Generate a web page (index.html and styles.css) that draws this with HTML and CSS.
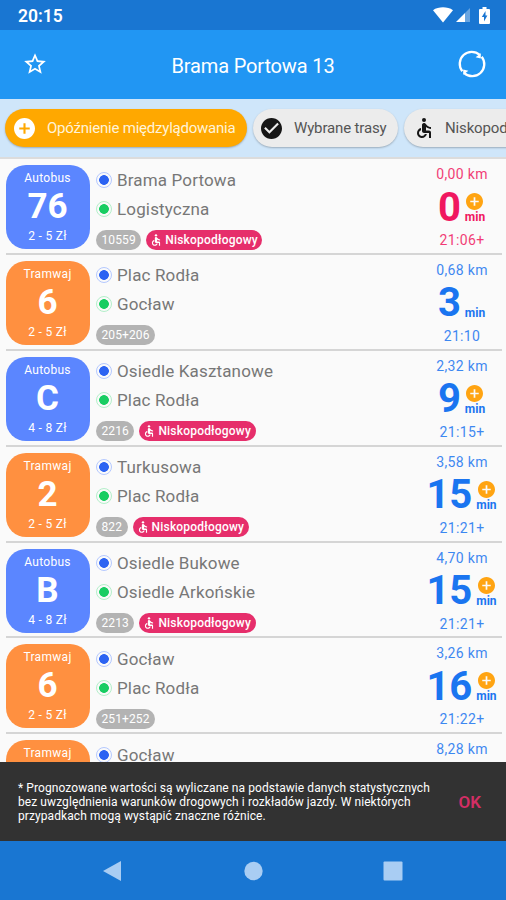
FILE: index.html
```html
<!DOCTYPE html>
<html lang="pl">
<head>
<meta charset="utf-8">
<title>Brama Portowa 13</title>
<link rel="stylesheet" href="styles.css">
</head>
<body>
<svg class="sprite" aria-hidden="true">
  <symbol id="wheelchair" viewBox="0 0 24 24"><circle cx="12" cy="4" r="2"/><path d="M19 13v-2c-1.54.02-3.09-.75-4.07-1.83l-1.29-1.43c-.17-.19-.38-.34-.61-.45-.01 0-.01-.01-.02-.01H13c-.35-.2-.75-.3-1.19-.26C10.76 7.11 10 8.04 10 9.09V15c0 1.1.9 2 2 2h5v5h2v-5.5c0-1.1-.9-2-2-2h-3v-3.45c1.29 1.07 3.25 1.94 5 1.95zm-6.17 5c-.41 1.16-1.52 2-2.83 2-1.66 0-3-1.34-3-3 0-1.31.84-2.41 2-2.83V12.1c-2.28.46-4 2.48-4 4.9 0 2.76 2.24 5 5 5 2.42 0 4.44-1.72 4.9-4h-2.07z"/></symbol>
  <symbol id="plus" viewBox="2 2 20 20"><path d="M12 2C6.48 2 2 6.48 2 12s4.480 10 10 10 10-4.480 10-10S17.520 2 12 2zm5 11h-4v4h-2v-4H7v-2h4V7h2v4h4v2z"/></symbol>
</svg>
<div class="screen">
  <div class="status">
    <span class="clock">20:15</span>
    <div class="status-icons">
      <svg width="20" height="16" viewBox="0 0 20 16"><path fill="#fff" d="M0 3.200C5.500-.6 14.500-.6 20 3.200L10 15.500z"/></svg>
      <svg width="14" height="14" viewBox="0 0 14 14"><path fill="#fff" d="M0 14L9 5v9z"/><path fill="#fff" opacity=".35" d="M9 5l5-5v14H9z"/></svg>
      <svg class="battery" width="11" height="17" viewBox="0 0 11 17"><path fill="#fff" d="M3.500 0h4v2H10q1 0 1 1v13q0 1-1 1H1q-1 0-1-1V3q0-1 1-1h2.500z"/><path fill="#1976d2" d="M6.500 4L2.800 10H5v4.500L8.400 8.600H6.500z"/></svg>
    </div>
  </div>
  <header class="appbar">
    <svg class="star" width="26" height="26" viewBox="0 0 24 24" fill="#fff"><path d="M22 9.240l-7.190-.62L12 2 9.190 8.630 2 9.240l5.460 4.730L5.820 21 12 17.270 18.180 21l-1.630-7.030L22 9.240zM12 15.400l-3.760 2.270 1-4.280-3.320-2.880 4.380-.38L12 6.100l1.710 4.040 4.380.38-3.320 2.880 1 4.280L12 15.400z"/></svg>
    <h1>Brama Portowa 13</h1>
    <svg class="sync" width="28" height="28" viewBox="0 0 28 28"><g fill="none" stroke="#fff" stroke-width="2.300"><path d="M4.300 21.200A12 12 0 0 1 21.800 4.900"/><path d="M23.700 6.800A12 12 0 0 1 6.200 23.100"/></g><path fill="#fff" d="M22.800 3.200v5.400l-5.200-1.300zM5.200 24.800v-5.400l5.200 1.300z"/></svg>
  </header>
  <nav class="chips">
    <div class="chip chip-delay"><svg width="21" height="21"><use href="#plus"/></svg><span>Opóźnienie międzylądowania</span></div>
    <div class="chip chip-routes"><svg width="21" height="21" viewBox="2 2 20 20"><path d="M12 2C6.480 2 2 6.480 2 12s4.480 10 10 10 10-4.480 10-10S17.520 2 12 2zm-2 15l-5-5 1.410-1.410L10 14.170l7.590-7.590L19 8l-9 9z"/></svg><span>Wybrane trasy</span></div>
    <div class="chip chip-low"><svg width="24" height="24"><use href="#wheelchair"/></svg><span>Niskopodłogowy</span></div>
  </nav>
  <main class="list">
    <article class="row now">
      <div class="line bus"><span>Autobus</span><b>76</b><span>2 - 5 Zł</span></div>
      <div class="route">
        <p class="stop from">Brama Portowa</p><p class="stop to">Logistyczna</p>
        <div class="tags"><span class="tag">10559</span><span class="tag low"><svg width="14" height="14"><use href="#wheelchair"/></svg>Niskopodłogowy</span></div>
      </div>
      <div class="eta"><span class="km">0,00 km</span><div class="mins"><b>0</b><div class="unit"><svg width="17" height="17"><use href="#plus"/></svg><i>min</i></div></div><span class="at">21:06+</span></div>
    </article>
    <article class="row">
      <div class="line tram"><span>Tramwaj</span><b>6</b><span>2 - 5 Zł</span></div>
      <div class="route">
        <p class="stop from">Plac Rodła</p><p class="stop to">Gocław</p>
        <div class="tags"><span class="tag">205+206</span></div>
      </div>
      <div class="eta"><span class="km">0,68 km</span><div class="mins"><b>3</b><div class="unit"><i>min</i></div></div><span class="at">21:10</span></div>
    </article>
    <article class="row">
      <div class="line bus"><span>Autobus</span><b>C</b><span>4 - 8 Zł</span></div>
      <div class="route">
        <p class="stop from">Osiedle Kasztanowe</p><p class="stop to">Plac Rodła</p>
        <div class="tags"><span class="tag">2216</span><span class="tag low"><svg width="14" height="14"><use href="#wheelchair"/></svg>Niskopodłogowy</span></div>
      </div>
      <div class="eta"><span class="km">2,32 km</span><div class="mins"><b>9</b><div class="unit"><svg width="17" height="17"><use href="#plus"/></svg><i>min</i></div></div><span class="at">21:15+</span></div>
    </article>
    <article class="row">
      <div class="line tram"><span>Tramwaj</span><b>2</b><span>2 - 5 Zł</span></div>
      <div class="route">
        <p class="stop from">Turkusowa</p><p class="stop to">Plac Rodła</p>
        <div class="tags"><span class="tag">822</span><span class="tag low"><svg width="14" height="14"><use href="#wheelchair"/></svg>Niskopodłogowy</span></div>
      </div>
      <div class="eta"><span class="km">3,58 km</span><div class="mins"><b>15</b><div class="unit"><svg width="17" height="17"><use href="#plus"/></svg><i>min</i></div></div><span class="at">21:21+</span></div>
    </article>
    <article class="row">
      <div class="line bus"><span>Autobus</span><b>B</b><span>4 - 8 Zł</span></div>
      <div class="route">
        <p class="stop from">Osiedle Bukowe</p><p class="stop to">Osiedle Arkońskie</p>
        <div class="tags"><span class="tag">2213</span><span class="tag low"><svg width="14" height="14"><use href="#wheelchair"/></svg>Niskopodłogowy</span></div>
      </div>
      <div class="eta"><span class="km">4,70 km</span><div class="mins"><b>15</b><div class="unit"><svg width="17" height="17"><use href="#plus"/></svg><i>min</i></div></div><span class="at">21:21+</span></div>
    </article>
    <article class="row">
      <div class="line tram"><span>Tramwaj</span><b>6</b><span>2 - 5 Zł</span></div>
      <div class="route">
        <p class="stop from">Gocław</p><p class="stop to">Plac Rodła</p>
        <div class="tags"><span class="tag">251+252</span></div>
      </div>
      <div class="eta"><span class="km">3,26 km</span><div class="mins"><b>16</b><div class="unit"><svg width="17" height="17"><use href="#plus"/></svg><i>min</i></div></div><span class="at">21:22+</span></div>
    </article>
    <article class="row">
      <div class="line tram"><span>Tramwaj</span></div>
      <div class="route"><p class="stop from">Gocław</p></div>
      <div class="eta"><span class="km">8,28 km</span></div>
    </article>
  </main>
  <aside class="snackbar">
    <p>* Prognozowane wartości są wyliczane na podstawie danych statystycznych<br>bez uwzględnienia warunków drogowych i rozkładów jazdy. W niektórych<br>przypadkach mogą wystąpić znaczne różnice.</p>
    <button>OK</button>
  </aside>
  <footer class="navbar">
    <svg width="20" height="22" viewBox="0 0 20 22"><path d="M18 1v20L0 11z"/></svg>
    <svg width="20" height="20" viewBox="0 0 20 20"><circle cx="10.500" cy="10" r="9.200"/></svg>
    <svg width="20" height="20" viewBox="0 0 20 20"><rect x=".5" y=".5" width="19" height="19" rx="1"/></svg>
  </footer>
</div>
</body>
</html>
```
FILE: styles.css
```css
* { box-sizing: border-box; }
body { margin: 0; font-family: Roboto, "Noto Sans", sans-serif; }
p, h1 { margin: 0; }
svg { display: block; flex: none; }
.sprite { display: none; }
.screen { width: 506px; height: 900px; display: flex; flex-direction: column; overflow: hidden; background: #fafafa; }

.status { flex: none; height: 30px; background: #1976d2; display: flex; align-items: center; justify-content: space-between; padding: 2px 16px 0 18px; color: #fff; }
.clock { font-size: 17.500px; font-weight: 600; letter-spacing: 0; line-height: 28px; }
.status-icons { display: flex; align-items: center; gap: 3px; margin-top: -2px; }
.battery { margin-left: 6px; }

.appbar { flex: none; height: 69px; background: #2196f3; display: flex; align-items: center; justify-content: space-between; padding: 0 20px 0 22px; }
.appbar h1 { font-size: 20px; font-weight: 400; letter-spacing: -.15px; color: #fff; padding-top: 2px; }
.star { margin-top: -1px; }
.sync { margin-top: -1px; }

.chips { flex: none; height: 60px; background: #cfe6fa; border-bottom: 2px solid #dcdcdc; display: flex; gap: 6px; padding: 10px 0 0 5px; overflow: hidden; }
.chip { flex: none; height: 38px; border-radius: 19px; background: #ececec; color: #555; display: flex; align-items: center; font-size: 15px; letter-spacing: -.15px; box-shadow: 0 1px 2px rgba(0, 0, 0, .25); white-space: nowrap; }
.chip-delay { width: 242px; padding-left: 9px; gap: 12px; background: #ffa800; color: #fff3d8; letter-spacing: -.22px; }
.chip-delay svg { fill: #fff; }
.chip-routes { width: 145px; padding-left: 8px; gap: 12px; }
.chip-routes svg, .chip-low svg { fill: #161616; }
.chip-low { width: 180px; padding-left: 8px; gap: 9px; }

.list { flex: none; height: 603px; padding-left: 5.500px; padding-right: 4px; overflow: hidden; }
.row { height: 95.900px; padding-top: 6px; border-bottom: 2px solid #d5d5d5; display: flex; color: #1a75f0; }
.row.now { color: #f01860; }
.line { flex: none; width: 84px; height: 84px; border-radius: 20px; color: #fff; display: flex; flex-direction: column; align-items: center; font-size: 12px; line-height: 16px; padding-top: 5px; letter-spacing: .3px; }
.line b { font-size: 35px; line-height: 42px; letter-spacing: 0; }
.bus { background: #5b86ff; }
.tram { background: #ff9040; }

.route { flex: 1; padding-left: 6.500px; }
.stop { display: flex; align-items: center; gap: 5px; height: 29px; font-size: 17px; letter-spacing: .15px; color: #777; white-space: nowrap; }
.stop::before { content: ""; width: 14px; height: 14px; border-radius: 50%; border: 1px solid; }
.from::before { border-color: #b5c9ff; background: radial-gradient(circle, #2c63f2 0 4.500px, #fafafa 5.200px); }
.to::before { border-color: #b4efca; background: radial-gradient(circle, #18cd62 0 4.500px, #fafafa 5.200px); }
.tags { display: flex; gap: 5px; margin-top: 6.500px; }
.tag { height: 20px; border-radius: 10px; padding: 0 5.500px; background: #b3b3b3; color: #fff; font-size: 12px; line-height: 20px; letter-spacing: .1px; display: flex; align-items: center; }
.low { background: #e62e6b; padding: 0 4.500px 0 3px; gap: 2px; font-weight: 500; letter-spacing: .2px; }
.low svg { fill: #fff; }

.eta { flex: none; width: 80px; display: flex; flex-direction: column; align-items: center; }
.km, .at { font-size: 14px; line-height: 18px; letter-spacing: .35px; opacity: .85; }
.mins { height: 48px; display: flex; align-items: center; gap: 4px; margin-left: -1px; }
.mins b { font-size: 40px; line-height: 48px; padding-top: 1px; }
.unit { height: 48px; display: flex; flex-direction: column; align-items: center; justify-content: flex-end; padding-bottom: 6px; }
.unit svg { fill: #ffa412; }
.unit i { font-style: normal; font-weight: 700; font-size: 12px; line-height: 15px; }

.snackbar { flex: none; height: 79px; background: #323232; display: flex; align-items: center; justify-content: space-between; padding: 0 25px 0 18px; }
.snackbar p { font-size: 12px; line-height: 14px; letter-spacing: .085px; color: #fff; white-space: nowrap; }
.snackbar button { border: 0; padding: 0; background: none; font: 600 17px Roboto, sans-serif; color: #d32e65; }

.navbar { flex: 1; background: #1976d2; display: flex; align-items: center; justify-content: space-between; padding: 0 103px; }
.navbar svg { fill: #a9cdf3; }
```
